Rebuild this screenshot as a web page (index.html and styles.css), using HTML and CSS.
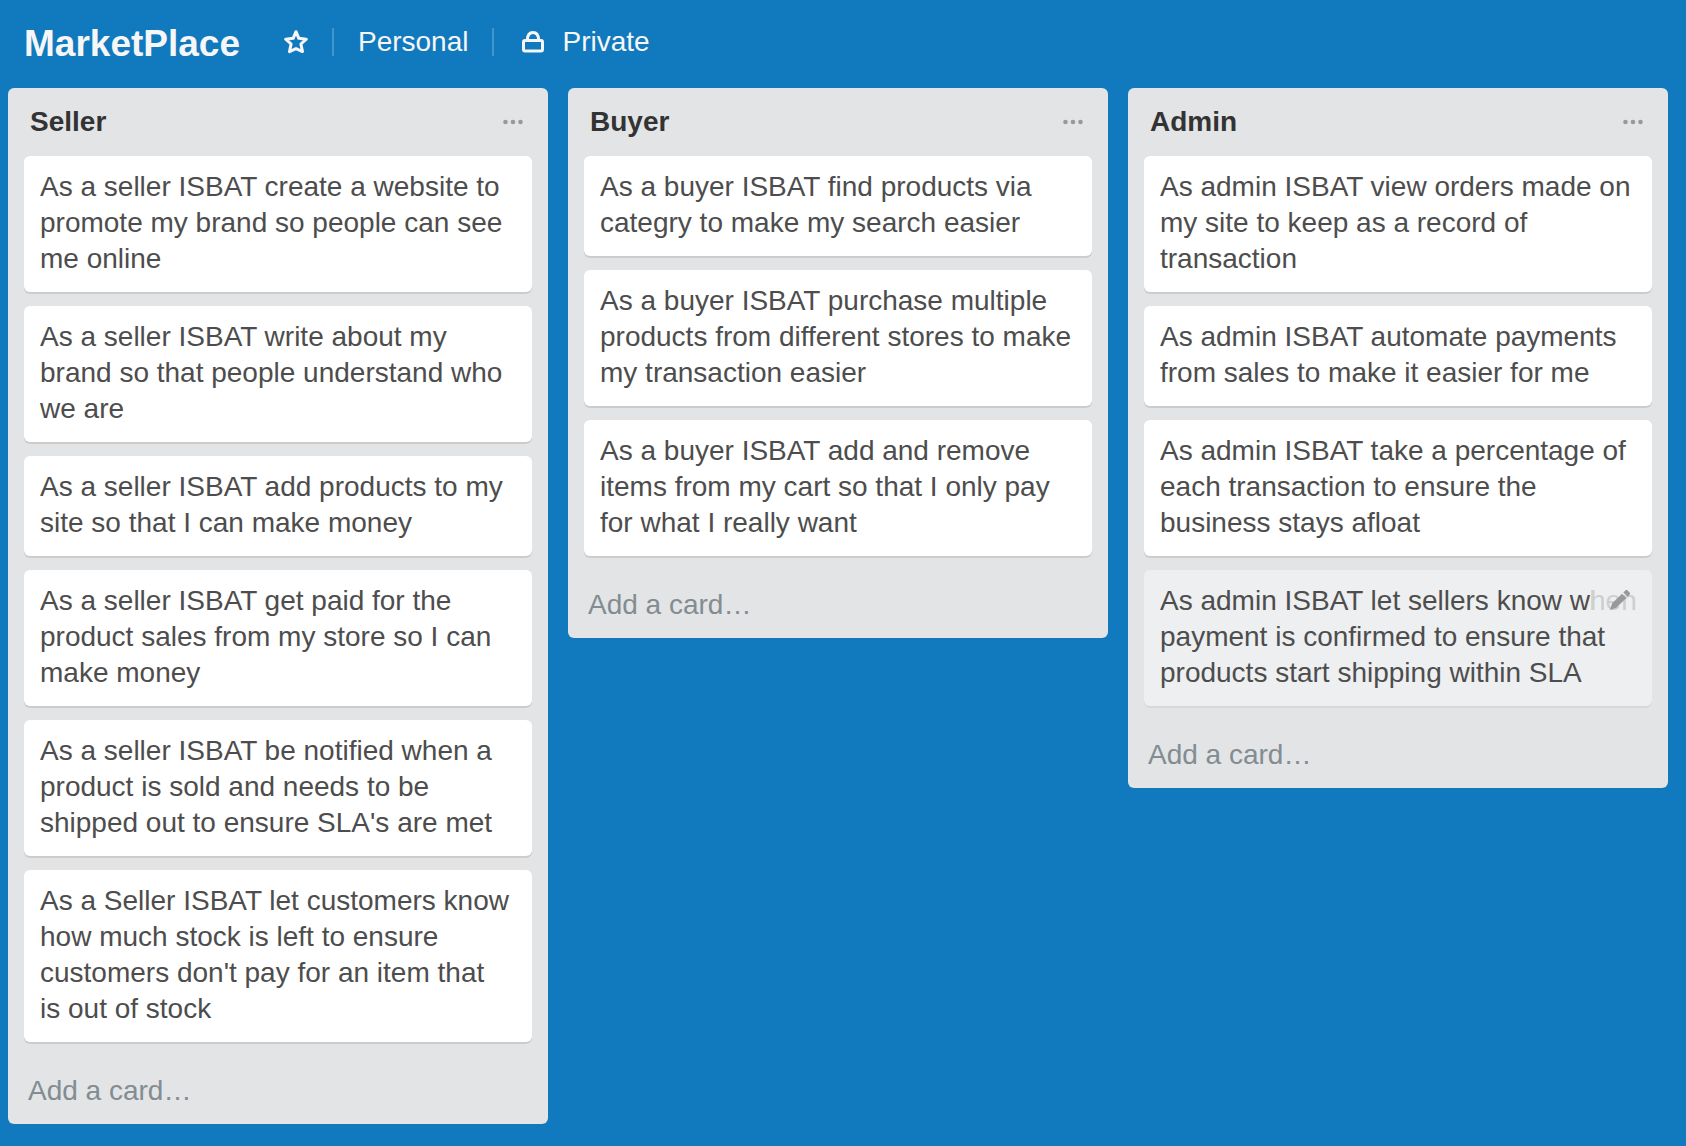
FILE: index.html
```html
<!DOCTYPE html>
<html lang="en">
<head>
<meta charset="utf-8">
<meta name="viewport" content="width=device-width, initial-scale=1">
<title>MarketPlace</title>
<link rel="stylesheet" href="styles.css">
</head>
<body>
<header class="board-header">
  <h1 class="board-title">MarketPlace</h1>
  <button class="header-btn star-btn" type="button" aria-label="Star board">
    <svg class="star" viewBox="0 0 24 24" aria-hidden="true"><path d="M12 1.700 14.800 8.300 22.300 9.200 16.900 14 18.500 21.600 12 18.600 5.500 21.600 7.100 14 1.700 9.200 9.200 8.300Z"/></svg>
  </button>
  <button class="header-btn org-btn" type="button">Personal</button>
  <button class="header-btn private-btn" type="button">
    <svg class="lock" viewBox="0 0 22 22" aria-hidden="true"><rect x="1.5" y="9.5" width="19" height="10.500" rx="1.5"/><path d="M5.300 9C5.500 4 7.500 1.500 11 1.500S16.500 4 16.700 9"/></svg>
    Private
  </button>
</header>
<main class="board">
  <section class="list">
    <header class="list-header">
      <h2 class="list-title">Seller</h2>
      <button class="menu-btn" type="button" aria-label="Seller list actions"><svg viewBox="0 0 20 6" aria-hidden="true"><circle cx="2.500" cy="3" r="2.300"/><circle cx="10" cy="3" r="2.300"/><circle cx="17.500" cy="3" r="2.300"/></svg></button>
    </header>
    <ul class="cards">
      <li class="card">As a seller ISBAT create a website to<br>promote my brand so people can see<br>me online</li>
      <li class="card">As a seller ISBAT write about my<br>brand so that people understand who<br>we are</li>
      <li class="card">As a seller ISBAT add products to my<br>site so that I can make money</li>
      <li class="card">As a seller ISBAT get paid for the<br>product sales from my store so I can<br>make money</li>
      <li class="card">As a seller ISBAT be notified when a<br>product is sold and needs to be<br>shipped out to ensure SLA's are met</li>
      <li class="card">As a Seller ISBAT let customers know<br>how much stock is left to ensure<br>customers don't pay for an item that<br>is out of stock</li>
    </ul>
    <button class="add-card" type="button">Add a card…</button>
  </section>
  <section class="list">
    <header class="list-header">
      <h2 class="list-title">Buyer</h2>
      <button class="menu-btn" type="button" aria-label="Buyer list actions"><svg viewBox="0 0 20 6" aria-hidden="true"><circle cx="2.500" cy="3" r="2.300"/><circle cx="10" cy="3" r="2.300"/><circle cx="17.500" cy="3" r="2.300"/></svg></button>
    </header>
    <ul class="cards">
      <li class="card">As a buyer ISBAT find products via<br>categry to make my search easier</li>
      <li class="card">As a buyer ISBAT purchase multiple<br>products from different stores to make<br>my transaction easier</li>
      <li class="card">As a buyer ISBAT add and remove<br>items from my cart so that I only pay<br>for what I really want</li>
    </ul>
    <button class="add-card" type="button">Add a card…</button>
  </section>
  <section class="list">
    <header class="list-header">
      <h2 class="list-title">Admin</h2>
      <button class="menu-btn" type="button" aria-label="Admin list actions"><svg viewBox="0 0 20 6" aria-hidden="true"><circle cx="2.500" cy="3" r="2.300"/><circle cx="10" cy="3" r="2.300"/><circle cx="17.500" cy="3" r="2.300"/></svg></button>
    </header>
    <ul class="cards">
      <li class="card">As admin ISBAT view orders made on<br>my site to keep as a record of<br>transaction</li>
      <li class="card">As admin ISBAT automate payments<br>from sales to make it easier for me</li>
      <li class="card">As admin ISBAT take a percentage of<br>each transaction to ensure the<br>business stays afloat</li>
      <li class="card card-active">As admin ISBAT let sellers know when<br>payment is confirmed to ensure that<br>products start shipping within SLA
        <button class="edit-btn" type="button" aria-label="Edit card"><svg viewBox="0 0 22 22" aria-hidden="true"><path d="M1 21 3 14.500 13 4.700 17.300 9 7.300 18.800ZM14.300 3.400 16.600 1.200Q17.600.4 18.600 1.400L20.600 3.400Q21.600 4.500 20.700 5.500L18.600 7.700Z"/></svg></button></li>
    </ul>
    <button class="add-card" type="button">Add a card…</button>
  </section>
</main>
</body>
</html>
```
FILE: styles.css
```css
* {
  box-sizing: border-box;
}

body {
  margin: 0;
  min-height: 100vh;
  background: #1179bd;
  color: #4d4d4d;
  font: 28px/36px "Helvetica Neue", "Liberation Sans", Arial, sans-serif;
}

button {
  margin: 0;
  padding: 0;
  border: 0;
  background: none;
  color: inherit;
  font: inherit;
  cursor: pointer;
}

svg {
  display: block;
}

.board-header {
  display: flex;
  align-items: center;
  height: 88px;
  padding: 0 24px 4px;
  color: #f6f6f6;
}

.board-title {
  margin: 4px 44px 0 0;
  font-size: 37px;
  line-height: 44px;
}

.header-btn {
  display: flex;
  align-items: center;
  height: 28px;
}

.star-btn,
.org-btn {
  padding-right: 24px;
  border-right: 2px solid #4195cb;
}

.star-btn {
  margin-right: 24px;
}

.org-btn {
  margin-right: 28px;
}

.private-btn {
  gap: 18px;
}

.star,
.lock {
  fill: none;
  stroke: currentColor;
  stroke-width: 3;
  stroke-linejoin: round;
}

.star {
  width: 24px;
  height: 24px;
}

.lock {
  width: 22px;
  height: 22px;
}

.board {
  display: grid;
  grid-template-columns: repeat(3, minmax(0, 1fr));
  align-items: start;
  gap: 20px;
  padding: 0 18px 22px 8px;
}

.list {
  padding: 0 16px 15px;
  border-radius: 6px;
  background: #e2e4e6;
}

.list-header {
  display: flex;
  align-items: center;
  justify-content: space-between;
  height: 68px;
  padding: 0 9px 0 6px;
}

.list-title {
  margin: 0;
  color: #333;
  font-size: 28px;
  line-height: 36px;
}

.menu-btn svg {
  width: 20px;
  height: 6px;
  fill: #999;
}

.cards {
  display: grid;
  gap: 14px;
  margin: 0;
  padding: 0;
  list-style: none;
}

.card {
  position: relative;
  padding: 13px 12px 15px 16px;
  border-radius: 6px;
  background: #fff;
  box-shadow: 0 2px 0 #ccc;
  white-space: nowrap;
}

.card-active {
  background: #edeff0;
  box-shadow: 0 2px 0 #d6dadc;
}

.edit-btn {
  position: absolute;
  top: 4px;
  right: 4px;
  display: grid;
  place-items: center;
  width: 56px;
  height: 52px;
  background: rgba(237, 239, 240, 0.8);
}

.edit-btn svg {
  width: 22px;
  height: 22px;
  fill: #999;
}

.add-card {
  display: block;
  margin-top: 31px;
  padding-left: 4px;
  color: #838c91;
}
```
